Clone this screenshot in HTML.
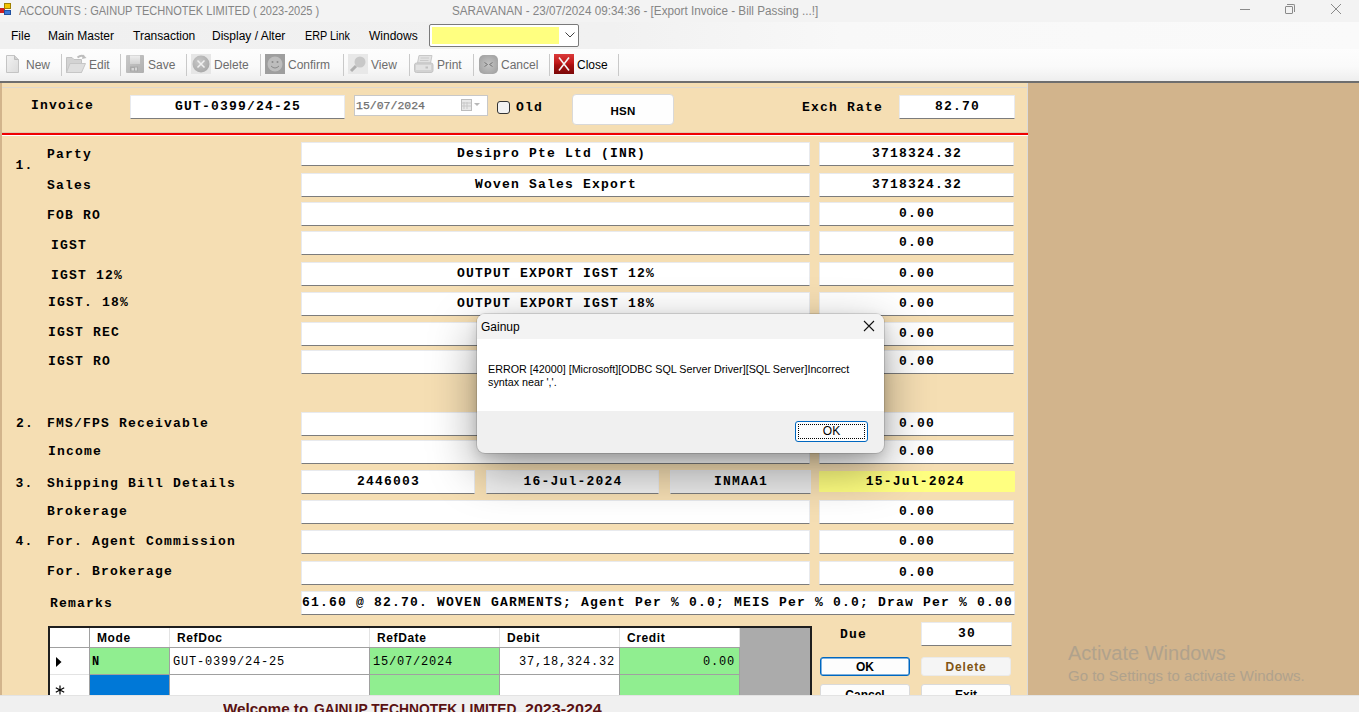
<!DOCTYPE html><html><head><meta charset="utf-8"><style>
*{margin:0;padding:0;box-sizing:border-box}
html,body{width:1359px;height:712px;overflow:hidden;background:#D2B48C;font-family:"Liberation Sans",sans-serif}
.a{position:absolute;white-space:nowrap}
.mi{font-size:12px;color:#000;line-height:15px}
.tb{font-size:12px;color:#6D6D6D;line-height:15px}
.sep{top:54px;width:1px;height:22px;background:#C9C9C9}
.lb{position:absolute;white-space:nowrap;font-family:"Liberation Mono",monospace;font-weight:bold;font-size:13px;letter-spacing:1.2px;line-height:17px;color:#000}
.tx{position:absolute;background:#fff;border:1px solid #E8EAEE;border-bottom:1px solid #7C7C7C;height:24px;font-family:"Liberation Mono",monospace;font-weight:bold;font-size:13px;letter-spacing:1.2px;line-height:22px;text-align:center;color:#000;overflow:hidden;white-space:nowrap;border-radius:1px;padding-left:1.2px}
.gh{position:absolute;font-family:"Liberation Sans",sans-serif;font-weight:bold;font-size:12px;letter-spacing:0.6px;line-height:14px;color:#000}
.gc{position:absolute;font-family:"Liberation Mono",monospace;font-size:12px;letter-spacing:0.8px;line-height:17px;color:#000;white-space:nowrap}
</style></head><body>
<div class="a" style="left:0;top:0;width:1359px;height:22px;background:#F3F3F3"></div>
<div class="a" style="left:0;top:4px;width:5px;height:5px;background:#D02020;top:8px"></div>
<div class="a" style="left:4px;top:3px;width:7px;height:6px;background:#F2C400;border:1px solid #A08000"></div>
<div class="a" style="left:4px;top:10px;width:7px;height:5px;background:#3C78D8;border:1px solid #2050A0"></div>
<div class="a" style="left:19px;top:3.8px;font-size:12px;line-height:15px;color:#858585;transform:scaleX(0.92);transform-origin:0 0">ACCOUNTS : GAINUP TECHNOTEK LIMITED ( 2023-2025 )</div>
<div class="a" style="left:452px;top:3.8px;font-size:12px;line-height:15px;color:#858585;transform:scaleX(0.975);transform-origin:0 0">SARAVANAN - 23/07/2024 09:34:36 - [Export Invoice - Bill Passing ...!]</div>
<div class="a" style="left:1240px;top:9px;width:10px;height:1px;background:#8A8A8A"></div>
<div class="a" style="left:1285px;top:6px;width:8px;height:8px;border:1px solid #8A8A8A;border-radius:1px"></div>
<div class="a" style="left:1287px;top:4px;width:8px;height:8px;border-top:1px solid #8A8A8A;border-right:1px solid #8A8A8A;border-radius:0 2px 0 0"></div>
<svg class="a" style="left:1330px;top:3px" width="12" height="12"><path d="M1 1L11 11M11 1L1 11" stroke="#8A8A8A" stroke-width="1"/></svg>
<div class="a" style="left:0;top:22px;width:1359px;height:27px;background:#F9F9F9"></div>
<div class="a" style="left:0;top:22px;width:1359px;height:27px;background:linear-gradient(90deg,#F0F0F0 0,#F1F1F1 45%,#F8F8F8 62%,#FAFAFA 100%)"></div>
<div class="a mi" style="left:11px;top:29px">File</div>
<div class="a mi" style="left:48px;top:29px">Main Master</div>
<div class="a mi" style="left:133px;top:29px">Transaction</div>
<div class="a mi" style="left:212px;top:29px">Display / Alter</div>
<div class="a mi" style="left:305px;top:29px;transform:scaleX(0.9);transform-origin:0 0">ERP Link</div>
<div class="a mi" style="left:369px;top:29px">Windows</div>
<div class="a" style="left:429px;top:24px;width:150px;height:23px;background:#fff;border:1px solid #7A7A7A;border-radius:2px"></div>
<div class="a" style="left:432px;top:27px;width:127px;height:17px;background:#FFFF80"></div>
<svg class="a" style="left:565px;top:32px" width="10" height="6"><path d="M0.5 0.5L5 5L9.5 0.5" stroke="#404040" fill="none" stroke-width="1"/></svg>
<div class="a" style="left:0;top:49px;width:1359px;height:32px;background:linear-gradient(#FDFDFD,#FAFAFA 55%,#EEEEEE)"></div>
<div class="a" style="left:0;top:81px;width:1359px;height:2px;background:#6E6E6E"></div>
<div class="a sep" style="left:61px"></div>
<div class="a sep" style="left:120px"></div>
<div class="a sep" style="left:186px"></div>
<div class="a sep" style="left:260px"></div>
<div class="a sep" style="left:343px"></div>
<div class="a sep" style="left:409px"></div>
<div class="a sep" style="left:473px"></div>
<div class="a sep" style="left:549px"></div>
<div class="a sep" style="left:618px"></div>
<div class="a tb" style="left:26px;top:58px;color:#6D6D6D">New</div>
<div class="a tb" style="left:89px;top:58px;color:#6D6D6D">Edit</div>
<div class="a tb" style="left:148px;top:58px;color:#6D6D6D">Save</div>
<div class="a tb" style="left:214px;top:58px;color:#6D6D6D">Delete</div>
<div class="a tb" style="left:288px;top:58px;color:#6D6D6D">Confirm</div>
<div class="a tb" style="left:371px;top:58px;color:#6D6D6D">View</div>
<div class="a tb" style="left:437px;top:58px;color:#6D6D6D">Print</div>
<div class="a tb" style="left:501px;top:58px;color:#6D6D6D">Cancel</div>
<div class="a tb" style="left:577px;top:58px;color:#000">Close</div>

<svg class="a" style="left:5px;top:55px" width="15" height="18"><defs><linearGradient id="ng" x1="0" y1="0" x2="1" y2="1"><stop offset="0" stop-color="#F2F2F2"/><stop offset="1" stop-color="#DCDCDC"/></linearGradient></defs><path d="M1.5 0.5H9.5L13.5 4.5V17.5H1.5Z" fill="url(#ng)" stroke="#C4C4C4"/><path d="M9.5 0.5V4.5H13.5" fill="#D0D0D0" stroke="#BDBDBD"/></svg>
<svg class="a" style="left:65px;top:54px" width="22" height="20"><path d="M1.5 3.5H7L9 5.5H16.5V18.5H1.5Z" fill="#D3D3D3" stroke="#C2C2C2"/><path d="M5 9.5H20.5L16.5 18.5H1.5Z" fill="#DEDEDE" stroke="#C6C6C6"/><path d="M12.5 3.5Q16 0.5 19 2.5" stroke="#BDBDBD" fill="none" stroke-width="2"/><path d="M18 0.5L21.5 4L17 5Z" fill="#BDBDBD"/></svg>
<svg class="a" style="left:126px;top:55px" width="18" height="18"><defs><linearGradient id="sg" x1="0" y1="0" x2="1" y2="1"><stop offset="0" stop-color="#C9C9C9"/><stop offset="1" stop-color="#AFAFAF"/></linearGradient><linearGradient id="sl" x1="0" y1="0" x2="0" y2="1"><stop offset="0" stop-color="#EFEFEF"/><stop offset="1" stop-color="#D2D2D2"/></linearGradient></defs><rect x="0" y="0" width="18" height="18" rx="1" fill="url(#sg)"/><rect x="4" y="0.5" width="10" height="8.5" fill="url(#sl)"/><rect x="4" y="11.5" width="8" height="5" fill="#A9A9A9"/><rect x="5.5" y="13" width="2.5" height="2.5" fill="#D6D6D6"/><rect x="9" y="12.5" width="2" height="3" fill="#D6D6D6"/></svg>
<svg class="a" style="left:191px;top:54px" width="20" height="20"><rect width="20" height="20" fill="#E6E6E6"/><defs><radialGradient id="dg" cx="0.4" cy="0.35" r="0.7"><stop offset="0" stop-color="#C8C8C8"/><stop offset="1" stop-color="#A8A8A8"/></radialGradient></defs><circle cx="10" cy="10" r="8.5" fill="url(#dg)"/><path d="M6.5 6.5L13.5 13.5M13.5 6.5L6.5 13.5" stroke="#F0F0F0" stroke-width="1.5"/></svg>
<svg class="a" style="left:265px;top:54px" width="20" height="20"><rect width="20" height="20" fill="#9E9E9E"/><circle cx="10" cy="10" r="7.5" fill="#BDBDBD"/><circle cx="7.5" cy="8" r="1" fill="#8A8A8A"/><circle cx="12.5" cy="8" r="1" fill="#8A8A8A"/><path d="M6 12Q10 16 14 12" stroke="#8A8A8A" fill="none"/></svg>
<svg class="a" style="left:348px;top:54px" width="20" height="20"><rect width="20" height="20" fill="#E8E8E8"/><circle cx="12" cy="8" r="5.5" fill="#C8C8C8"/><path d="M8 12L3 17" stroke="#B0B0B0" stroke-width="3"/></svg>
<svg class="a" style="left:414px;top:55px" width="20" height="18"><path d="M5 0.5H18L16.5 8H3.5Z" fill="#E2E2E2" stroke="#C8C8C8"/><path d="M6.5 3H15M6 5.5H14.5" stroke="#CACACA"/><rect x="0.5" y="8" width="18.5" height="9.5" rx="2" fill="#D2D2D2" stroke="#C4C4C4"/><rect x="2" y="10" width="15" height="5" fill="#E2E2E2"/><rect x="11.5" y="11.5" width="2.5" height="2" fill="#C0C0C0"/></svg>
<svg class="a" style="left:479px;top:55px" width="19" height="19"><defs><radialGradient id="cg" cx="0.5" cy="0.5" r="0.6"><stop offset="0" stop-color="#C4C4C4"/><stop offset="1" stop-color="#A2A2A2"/></radialGradient></defs><rect width="19" height="19" rx="5" fill="url(#cg)"/><path d="M5.5 7.5L8.5 9.5L5.5 11.5M13.5 7.5L10.5 9.5L13.5 11.5" stroke="#6E6E6E" fill="none" stroke-width="0.9"/></svg>
<svg class="a" style="left:554px;top:54px" width="20" height="20"><defs><linearGradient id="rg" x1="0" y1="0" x2="0" y2="1"><stop offset="0" stop-color="#DA3A3A"/><stop offset="0.45" stop-color="#C01818"/><stop offset="0.55" stop-color="#A81010"/><stop offset="1" stop-color="#7A0808"/></linearGradient></defs><rect width="20" height="20" fill="url(#rg)"/><path d="M5 3.5L15 16.5M15 3.5L5 16.5" stroke="#F4F4F4" stroke-width="1.6"/></svg>

<div class="a" style="left:2px;top:83px;width:1026px;height:612px;background:#F5DEB3"></div>
<div class="a" style="left:1027px;top:83px;width:1px;height:612px;background:#DADADA"></div>
<div class="a" style="left:2px;top:87px;width:1025px;height:1px;background:#DDD8CF"></div>
<div class="a" style="left:2px;top:132px;width:1026px;height:1px;background:#E0C8B0"></div>
<div class="a" style="left:2px;top:133px;width:1026px;height:2px;background:#F00000"></div>
<div class="a" style="left:2px;top:135px;width:1026px;height:1px;background:#FFFFFF"></div>
<div class="lb" style="left:31px;top:97px">Invoice</div>
<div class="tx" style="left:130px;top:95px;width:215px;height:24px">GUT-0399/24-25</div>
<div class="a" style="left:354px;top:95px;width:134px;height:21px;background:#fff;border:1px solid #C8C8C8"></div>
<div class="a" style="left:356px;top:99px;font-size:11.5px;line-height:14px;color:#6D6D6D;-webkit-text-stroke:0.25px #6D6D6D;font-family:'Liberation Mono',monospace">15/07/2024</div>
<svg class="a" style="left:461px;top:98px" width="20" height="14"><rect x="0.5" y="1.5" width="10" height="11" fill="#E8E8E8" stroke="#BDBDBD"/><path d="M3 4V11M6 4V11M1 5H10M1 8H10" stroke="#C8C8C8"/><path d="M13 5H19L16 8Z" fill="#B8B8B8"/></svg>
<div class="a" style="left:497px;top:101px;width:13px;height:13px;background:#F2F2F2;border:1px solid #333;border-radius:3px"></div>
<div class="lb" style="left:516px;top:99px">Old</div>
<div class="a" style="left:572px;top:94px;width:102px;height:31px;background:#FEFEFE;border:1px solid #D9D9D9;border-radius:4px"></div>
<div class="a" style="left:572px;top:103.5px;width:102px;text-align:center;font-weight:bold;font-size:11.5px;letter-spacing:0.3px;line-height:15px;color:#000">HSN</div>
<div class="lb" style="left:802px;top:99px">Exch Rate</div>
<div class="tx" style="left:899px;top:95px;width:116px;height:24px">82.70</div>
<div class="lb" style="left:15.5px;top:157px">1.</div>
<div class="lb" style="left:47px;top:146.4px">Party</div>
<div class="lb" style="left:47px;top:177px">Sales</div>
<div class="lb" style="left:47px;top:207px">FOB RO</div>
<div class="lb" style="left:51px;top:237px">IGST</div>
<div class="lb" style="left:51px;top:267px">IGST 12%</div>
<div class="lb" style="left:48px;top:294.3px">IGST. 18%</div>
<div class="lb" style="left:48px;top:324.4px">IGST REC</div>
<div class="lb" style="left:48px;top:353px">IGST RO</div>
<div class="lb" style="left:16px;top:415px">2.</div>
<div class="lb" style="left:47px;top:415px">FMS/FPS Receivable</div>
<div class="lb" style="left:48px;top:443.2px">Income</div>
<div class="lb" style="left:15.5px;top:475px">3.</div>
<div class="lb" style="left:47px;top:475px">Shipping Bill Details</div>
<div class="lb" style="left:47px;top:503.4px">Brokerage</div>
<div class="lb" style="left:15.5px;top:533px">4.</div>
<div class="lb" style="left:47px;top:533px">For. Agent Commission</div>
<div class="lb" style="left:47px;top:563.2px">For. Brokerage</div>
<div class="lb" style="left:50px;top:595px">Remarks</div>
<div class="tx" style="left:301px;top:142px;width:509px">Desipro Pte Ltd (INR)&nbsp;</div>
<div class="tx" style="left:819px;top:142px;width:195px">3718324.32</div>
<div class="tx" style="left:301px;top:173px;width:509px">Woven Sales Export</div>
<div class="tx" style="left:819px;top:173px;width:195px">3718324.32</div>
<div class="tx" style="left:301px;top:202px;width:509px"></div>
<div class="tx" style="left:819px;top:202px;width:195px">0.00</div>
<div class="tx" style="left:301px;top:231px;width:509px"></div>
<div class="tx" style="left:819px;top:231px;width:195px">0.00</div>
<div class="tx" style="left:301px;top:262px;width:509px">OUTPUT EXPORT IGST 12%</div>
<div class="tx" style="left:819px;top:262px;width:195px">0.00</div>
<div class="tx" style="left:301px;top:292px;width:509px">OUTPUT EXPORT IGST 18%</div>
<div class="tx" style="left:819px;top:292px;width:195px">0.00</div>
<div class="tx" style="left:301px;top:322px;width:509px"></div>
<div class="tx" style="left:819px;top:322px;width:195px">0.00</div>
<div class="tx" style="left:301px;top:350px;width:509px"></div>
<div class="tx" style="left:819px;top:350px;width:195px">0.00</div>
<div class="tx" style="left:301px;top:412px;width:509px"></div>
<div class="tx" style="left:819px;top:412px;width:195px">0.00</div>
<div class="tx" style="left:301px;top:440px;width:509px"></div>
<div class="tx" style="left:819px;top:440px;width:195px">0.00</div>
<div class="tx" style="left:301px;top:470px;width:174px">2446003</div>
<div class="tx" style="left:486px;top:470px;width:173px;background:#F0F0F0">16-Jul-2024</div>
<div class="tx" style="left:670px;top:470px;width:141px;background:#EAEAEA">INMAA1</div>
<div class="tx" style="left:819px;top:471px;width:196px;height:21px;border:none;background:#FFFF80;line-height:21px;padding-left:0;padding-right:3.4px">15-Jul-2024</div>
<div class="tx" style="left:301px;top:500px;width:509px"></div>
<div class="tx" style="left:819px;top:500px;width:195px">0.00</div>
<div class="tx" style="left:301px;top:530px;width:509px"></div>
<div class="tx" style="left:819px;top:530px;width:195px">0.00</div>
<div class="tx" style="left:301px;top:561px;width:509px"></div>
<div class="tx" style="left:819px;top:561px;width:195px">0.00</div>
<div class="tx" style="left:301px;top:591px;width:714px;text-align:left;padding-left:0">61.60 @ 82.70. WOVEN GARMENTS; Agent Per % 0.0; MEIS Per % 0.0; Draw Per % 0.00</div>
<div class="lb" style="left:840px;top:625.5px">Due</div>
<div class="tx" style="left:921px;top:622px;width:91px">30</div>
<div class="a" style="left:820px;top:657px;width:90px;height:19px;background:#FDFDFD;border:1px solid #0067C0;border-radius:3px;box-shadow:inset 0 0 0 0.5px #0067C0"></div>
<div class="a" style="left:820px;top:660px;width:90px;text-align:center;font-weight:bold;font-size:12px;line-height:14px">OK</div>
<div class="a" style="left:921px;top:657px;width:90px;height:19px;background:#F5F5F5;border:1px solid #EAEAEA;border-radius:3px"></div>
<div class="a" style="left:921px;top:660px;width:90px;text-align:center;font-weight:bold;font-size:12px;line-height:14px;color:#805414;letter-spacing:0.8px">Delete</div>
<div class="a" style="left:820px;top:684px;width:90px;height:20px;background:#FDFDFD;border:1px solid #DADADA;border-radius:3px"></div>
<div class="a" style="left:820px;top:688px;width:90px;text-align:center;font-weight:bold;font-size:12px;line-height:14px">Cancel</div>
<div class="a" style="left:921px;top:684px;width:90px;height:20px;background:#FDFDFD;border:1px solid #DADADA;border-radius:3px"></div>
<div class="a" style="left:921px;top:688px;width:90px;text-align:center;font-weight:bold;font-size:12px;line-height:14px">Exit</div>
<div class="a" style="left:48px;top:626px;width:764px;height:80px;background:#fff;border:2px solid #1E1E1E"></div>
<div class="a" style="left:740px;top:628px;width:70px;height:70px;background:#ABABAB"></div>
<div class="a" style="left:89px;top:628px;width:1px;height:70px;background:#A0A0A0"></div>
<div class="a" style="left:169px;top:628px;width:1px;height:19px;background:#E3E3E3"></div>
<div class="a" style="left:169px;top:647px;width:1px;height:51px;background:#A0A0A0"></div>
<div class="a" style="left:369px;top:628px;width:1px;height:19px;background:#E3E3E3"></div>
<div class="a" style="left:369px;top:647px;width:1px;height:51px;background:#A0A0A0"></div>
<div class="a" style="left:499px;top:628px;width:1px;height:19px;background:#E3E3E3"></div>
<div class="a" style="left:499px;top:647px;width:1px;height:51px;background:#A0A0A0"></div>
<div class="a" style="left:619px;top:628px;width:1px;height:19px;background:#E3E3E3"></div>
<div class="a" style="left:619px;top:647px;width:1px;height:51px;background:#A0A0A0"></div>
<div class="a" style="left:739px;top:628px;width:1px;height:19px;background:#E3E3E3"></div>
<div class="a" style="left:739px;top:647px;width:1px;height:51px;background:#A0A0A0"></div>
<div class="a" style="left:90px;top:648px;width:79px;height:26px;background:#90EE90"></div>
<div class="a" style="left:370px;top:648px;width:129px;height:26px;background:#90EE90"></div>
<div class="a" style="left:620px;top:648px;width:119px;height:26px;background:#90EE90"></div>
<div class="a" style="left:90px;top:675px;width:79px;height:25px;background:#0078D7"></div>
<div class="a" style="left:370px;top:675px;width:129px;height:25px;background:#90EE90"></div>
<div class="a" style="left:620px;top:675px;width:119px;height:25px;background:#90EE90"></div>
<div class="a" style="left:50px;top:647px;width:690px;height:1px;background:#A0A0A0"></div>
<div class="a" style="left:50px;top:674px;width:39px;height:1px;background:#E3E3E3"></div>
<div class="a" style="left:89px;top:674px;width:651px;height:1px;background:#A0A0A0"></div>
<div class="gh" style="left:97px;top:631px">Mode</div>
<div class="gh" style="left:177px;top:631px">RefDoc</div>
<div class="gh" style="left:377px;top:631px">RefDate</div>
<div class="gh" style="left:507px;top:631px">Debit</div>
<div class="gh" style="left:627px;top:631px">Credit</div>
<svg class="a" style="left:56px;top:657px" width="6" height="10"><path d="M0 0L5.5 5L0 10Z" fill="#000"/></svg>
<svg class="a" style="left:55px;top:685px" width="10" height="10"><path d="M5 0.5V9.5M0.8 2.8L9.2 7.2M9.2 2.8L0.8 7.2" stroke="#000" stroke-width="1.2"/></svg>
<div class="gc" style="left:92px;top:654px;font-weight:bold">N</div>
<div class="gc" style="left:173px;top:654px">GUT-0399/24-25</div>
<div class="gc" style="left:373px;top:654px">15/07/2024</div>
<div class="gc" style="left:500px;top:654px;width:115px;text-align:right">37,18,324.32</div>
<div class="gc" style="left:620px;top:654px;width:115px;text-align:right">0.00</div>
<div class="a" style="left:0;top:695px;width:1359px;height:17px;background:#F0F0F0;border-top:1px solid #E3E3E3"></div>
<div class="a" style="left:223.3px;font-weight:bold;font-size:14.8px;line-height:17px;color:#5A1212;transform-origin:0 0;top:700.5px;transform:scaleX(1.03)">Welcome to</div>
<div class="a" style="left:313.8px;font-weight:bold;font-size:14.8px;line-height:17px;color:#5A1212;transform-origin:0 0;top:700.5px;transform:scaleX(0.934)">GAINUP TECHNOTEK LIMITED</div>
<div class="a" style="left:525.2px;font-weight:bold;font-size:14.8px;line-height:17px;color:#5A1212;transform-origin:0 0;top:700.5px;transform:scaleX(1.085)">2023-2024</div>
<div class="a" style="left:1068px;top:641px;font-size:20px;line-height:24px;color:#B0A28C">Activate Windows</div>
<div class="a" style="left:1068px;top:667px;font-size:15px;line-height:17px;color:#B0A28C">Go to Settings to activate Windows.</div>
<div class="a" style="left:477px;top:314px;width:407px;height:139px;border-radius:8px;background:#F0F0F0;box-shadow:0 16px 48px rgba(0,0,0,0.38),0 4px 12px rgba(0,0,0,0.15),0 0 0 1px rgba(0,0,0,0.12);overflow:hidden"><div style="position:absolute;left:0;top:0;width:407px;height:25px;background:#F3F3F3"></div><div style="position:absolute;left:0;top:25px;width:407px;height:72px;background:#fff"></div></div>
<div class="a" style="left:481px;top:320px;font-size:12px;line-height:15px;color:#000">Gainup</div>
<svg class="a" style="left:863px;top:320px" width="12" height="12"><path d="M1 1L11 11M11 1L1 11" stroke="#111" stroke-width="1.1"/></svg>
<div class="a" style="left:488px;top:363px;font-size:10.75px;line-height:13px;color:#000">ERROR [42000] [Microsoft][ODBC SQL Server Driver][SQL Server]Incorrect<br>syntax near ','.</div>
<div class="a" style="left:795px;top:421px;width:73px;height:21px;background:#FDFDFD;border:1px solid #0067C0;border-radius:3px"></div>
<div class="a" style="left:798px;top:424px;width:67px;height:15px;border:1px dotted #000"></div>
<div class="a" style="left:795px;top:424px;width:73px;text-align:center;font-size:12px;line-height:15px;color:#000">OK</div>
</body></html>
